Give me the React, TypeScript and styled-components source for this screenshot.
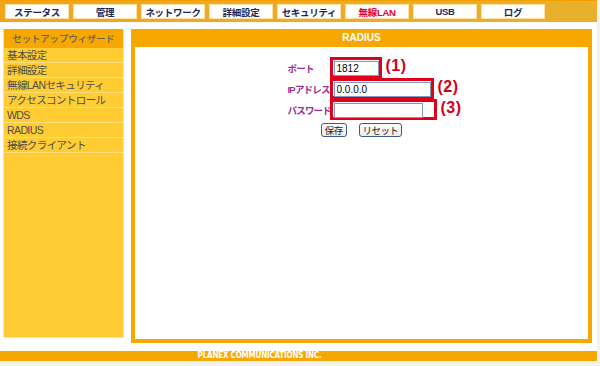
import React from 'react';
import styled, { createGlobalStyle } from 'styled-components';

const GlobalStyle = createGlobalStyle`
  body {
    margin: 0;
    background: #f4f2ee;
    font-family: 'Liberation Sans', 'Noto Sans CJK JP', sans-serif;
  }
`;

const ORANGE = '#f7a800';

const tabs = [
  { label: 'ステータス' },
  { label: '管理' },
  { label: 'ネットワーク' },
  { label: '詳細設定' },
  { label: 'セキュリティ' },
  { label: '無線LAN', active: true },
  { label: 'USB' },
  { label: 'ログ' },
];

const menu = ['基本設定', '詳細設定', '無線LANセキュリティ', 'アクセスコントロール', 'WDS', 'RADIUS', '接続クライアント'];

const fields = [
  { label: 'ポート', value: '1812', box: 52, input: 45, mark: '(1)' },
  { label: 'IPアドレス', value: '0.0.0.0', box: 104, input: 97, mark: '(2)' },
  { label: 'パスワード', value: '', box: 107, input: 89, mark: '(3)' },
];

const App = () => {
  return (
    <>
      <GlobalStyle />
      <Page>
        <TopNav>
          {tabs.map((t) => (
            <Tab key={t.label} $active={t.active}>
              {t.label}
            </Tab>
          ))}
        </TopNav>
        <Content>
          <Sidebar>
            <SideHeader>セットアップウィザード</SideHeader>
            {menu.map((m) => (
              <SideItem key={m}>{m}</SideItem>
            ))}
          </Sidebar>
          <Main>
            <MainHeader>RADIUS</MainHeader>
            <MainBody>
              <Form>
                {fields.map((f) => (
                  <React.Fragment key={f.label}>
                    <Label>{f.label}</Label>
                    <Field>
                      <Annotation $width={f.box}>
                        <Input $width={f.input} defaultValue={f.value} type={f.mark === '(3)' ? 'password' : 'text'} />
                      </Annotation>
                      <Marker $left={f.box + 4}>{f.mark}</Marker>
                    </Field>
                  </React.Fragment>
                ))}
              </Form>
              <Buttons>
                <Button>保存</Button>
                <Button>リセット</Button>
              </Buttons>
            </MainBody>
          </Main>
        </Content>
        <Footer>PLANEX COMMUNICATIONS INC.</Footer>
      </Page>
    </>
  );
};

const Page = styled.div`
  width: 597px;
  height: 361px;
  background: #fff;
  display: flex;
  flex-direction: column;
`;

const TopNav = styled.div`
  height: 22px;
  box-sizing: border-box;
  padding: 4px 0 0 5px;
  display: flex;
  align-items: flex-start;
  gap: 4px;
  border-top: 1px solid #f29d00;
  background: linear-gradient(90deg, #f1a51c 0%, #eeab26 50%, #e8b02c 100%);
`;

const Tab = styled.div<{ $active?: boolean }>`
  width: 64px;
  height: 15px;
  margin-top: -1px;
  box-sizing: border-box;
  background: #fff;
  border: 1px solid #fbe2a4;
  display: flex;
  align-items: center;
  justify-content: center;
  font-size: 9.5px;
  font-weight: bold;
  letter-spacing: -0.3px;
  color: ${(p) => (p.$active ? '#e8001c' : '#1b2a55')};
`;

const Content = styled.div`
  display: flex;
  align-items: flex-start;
  gap: 7px;
  margin-top: 7px;
  padding-left: 3px;
  height: 314px;
`;

const Sidebar = styled.div`
  width: 121px;
  height: 309px;
  box-sizing: border-box;
  background: #ffcc33;
  border: 1px solid #fde3a0;
  border-top: none;
`;

const SideHeader = styled.div`
  height: 19px;
  background: ${ORANGE};
  color: #66625a;
  font-size: 9.5px;
  font-weight: 500;
  line-height: 19px;
  text-align: center;
  letter-spacing: -0.2px;
`;

const SideItem = styled.div`
  height: 14px;
  border-bottom: 1px solid #ffe27e;
  padding-left: 3px;
  font-size: 10.5px;
  line-height: 15px;
  color: #4e4e4e;
  letter-spacing: -0.6px;
  white-space: nowrap;
`;

const Main = styled.div`
  width: 461px;
  height: 314px;
  box-sizing: border-box;
  background: ${ORANGE};
  padding: 0 4px 4px 4px;
  display: flex;
  flex-direction: column;
`;

const MainHeader = styled.div`
  height: 18px;
  line-height: 18px;
  text-align: center;
  color: #fff;
  font-size: 10px;
  font-weight: bold;
`;

const MainBody = styled.div`
  flex: 1;
  background: #fff;
  padding-top: 10px;
  display: flex;
  flex-direction: column;
  align-items: center;
`;

const Form = styled.div`
  display: grid;
  grid-template-columns: 42px 107px;
  grid-auto-rows: 21px;
  margin-left: 1px;
`;

const Label = styled.div`
  align-self: center;
  color: #993399;
  font-size: 9.5px;
  font-weight: bold;
  letter-spacing: -0.8px;
  white-space: nowrap;
`;

const Field = styled.div`
  position: relative;
  display: flex;
  align-items: center;
`;

const Annotation = styled.div<{ $width: number }>`
  width: ${(p) => p.$width}px;
  height: 21px;
  box-sizing: border-box;
  border: 3px solid #e0001b;
  padding-left: 1px;
  display: flex;
  align-items: center;
`;

const Input = styled.input<{ $width: number }>`
  width: ${(p) => p.$width}px;
  height: 15px;
  box-sizing: border-box;
  border: 1px solid #7f9db9;
  padding: 0 2px;
  margin: 2px 0 0 0;
  font-family: 'Liberation Sans', sans-serif;
  font-size: 10px;
  color: #000;
  outline: none;
`;

const Marker = styled.span<{ $left: number }>`
  position: absolute;
  left: ${(p) => p.$left}px;
  top: 0;
  color: #d4001a;
  font-size: 16px;
  font-weight: bold;
  letter-spacing: 0.5px;
  white-space: nowrap;
`;

const Buttons = styled.div`
  display: flex;
  gap: 12px;
  margin-top: 3px;
`;

const Button = styled.button`
  height: 14px;
  padding: 0 3px;
  box-sizing: border-box;
  border: 1px solid #3c5a8c;
  border-radius: 3px;
  background: linear-gradient(#fdfdfb, #ecebe6);
  font-family: 'Noto Sans CJK JP', sans-serif;
  font-size: 9.5px;
  line-height: 12px;
  letter-spacing: -0.6px;
  color: #222;
`;

const Footer = styled.div`
  margin-top: 8px;
  height: 10px;
  padding-right: 78px;
  background: ${ORANGE};
  color: #fff;
  font-family: 'DejaVu Sans Condensed', 'DejaVu Sans', sans-serif;
  font-stretch: condensed;
  font-size: 8px;
  font-weight: bold;
  line-height: 10px;
  text-align: center;
  letter-spacing: -0.2px;
`;

export default App;
